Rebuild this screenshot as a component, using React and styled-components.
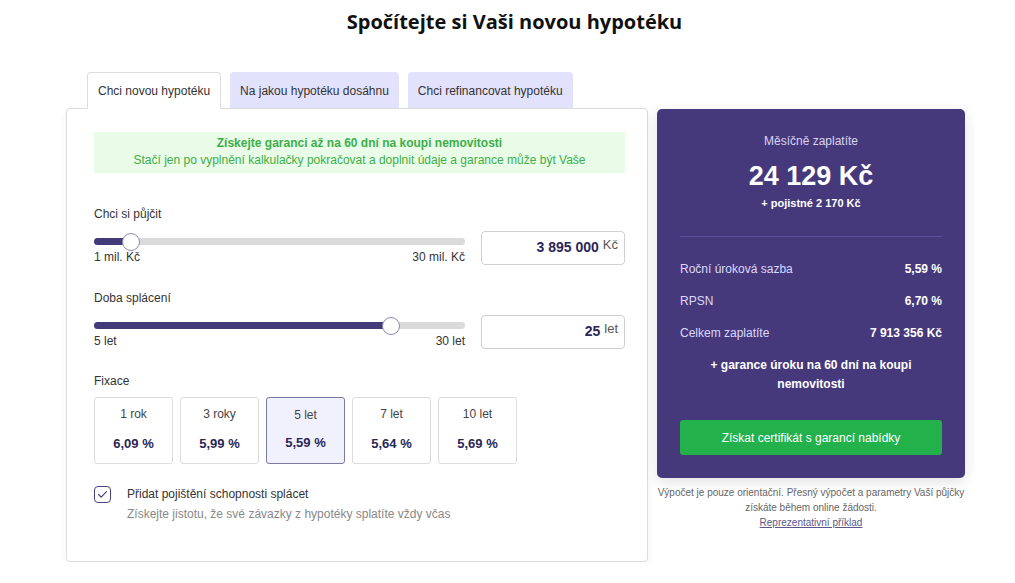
import styled, { createGlobalStyle } from "styled-components"

const GlobalStyle = createGlobalStyle`
    * { box-sizing: border-box; }
    body {
        margin: 0;
        background: #fff;
        font-family: "Liberation Sans", Arial, sans-serif;
        color: #333;
    }
`

const fixations = [
    { label: '1 rok', rate: '6,09 %' },
    { label: '3 roky', rate: '5,99 %' },
    { label: '5 let', rate: '5,59 %', active: true },
    { label: '7 let', rate: '5,64 %' },
    { label: '10 let', rate: '5,69 %' },
]

const Slider = ({ percent }) => (
    <Track>
        <Fill style={{ width: percent + '%' }} />
        <Thumb style={{ left: percent + '%' }} />
    </Track>
)

const App = () => {
    return (
        <Page>
            <GlobalStyle />
            <Title>Spočítejte si Vaši novou hypotéku</Title>

            <Main>
                <LeftColumn>
                    <Tabs>
                        <Tab $active>Chci novou hypotéku</Tab>
                        <Tab>Na jakou hypotéku dosáhnu</Tab>
                        <Tab>Chci refinancovat hypotéku</Tab>
                    </Tabs>

                    <Card>
                        <Banner>
                            <strong>Získejte garanci až na 60 dní na koupi nemovitosti</strong>
                            <span>Stačí jen po vyplnění kalkulačky pokračovat a doplnit údaje a garance může být Vaše</span>
                        </Banner>

                        <Field $top={34}>
                            <Label>Chci si půjčit</Label>
                            <SliderRow>
                                <SliderBox>
                                    <Slider percent={10} />
                                    <Limits>
                                        <span>1 mil. Kč</span>
                                        <span>30 mil. Kč</span>
                                    </Limits>
                                </SliderBox>
                                <ValueInput>
                                    <b>3 895 000</b>
                                    <small>Kč</small>
                                </ValueInput>
                            </SliderRow>
                        </Field>

                        <Field $top={26}>
                            <Label>Doba splácení</Label>
                            <SliderRow>
                                <SliderBox>
                                    <Slider percent={80} />
                                    <Limits>
                                        <span>5 let</span>
                                        <span>30 let</span>
                                    </Limits>
                                </SliderBox>
                                <ValueInput>
                                    <b>25</b>
                                    <small>let</small>
                                </ValueInput>
                            </SliderRow>
                        </Field>

                        <Field $top={25}>
                            <Label>Fixace</Label>
                            <FixList>
                                {fixations.map(f => (
                                    <FixOption key={f.label} $active={f.active}>
                                        <span>{f.label}</span>
                                        <b>{f.rate}</b>
                                    </FixOption>
                                ))}
                            </FixList>
                        </Field>

                        <Insurance>
                            <Checkbox>
                                <svg width="11" height="9" viewBox="0 0 11 9">
                                    <path d="M1.5 4.5 L4.2 7.2 L9.5 1.6" fill="none" stroke="#4a4180" strokeWidth="1.2" strokeLinecap="round" strokeLinejoin="round" />
                                </svg>
                            </Checkbox>
                            <InsuranceBody>
                                <InsuranceTitle>Přidat pojištění schopnosti splácet</InsuranceTitle>
                                <InsuranceText>Získejte jistotu, že své závazky z hypotéky splatíte vždy včas</InsuranceText>
                            </InsuranceBody>
                        </Insurance>
                    </Card>
                </LeftColumn>

                <RightColumn>
                    <Summary>
                        <SummaryLabel>Měsíčně zaplatíte</SummaryLabel>
                        <Amount>24 129 Kč</Amount>
                        <Extra>+ pojistné 2 170 Kč</Extra>

                        <Divider />

                        <Row><span>Roční úroková sazba</span><b>5,59 %</b></Row>
                        <Row><span>RPSN</span><b>6,70 %</b></Row>
                        <Row><span>Celkem zaplatíte</span><b>7 913 356 Kč</b></Row>

                        <Guarantee>+ garance úroku na 60 dní na koupi nemovitosti</Guarantee>

                        <GreenButton>Získat certifikát s garancí nabídky</GreenButton>
                    </Summary>

                    <Note>
                        Výpočet je pouze orientační. Přesný výpočet a parametry Vaší půjčky získáte během online žádosti.
                        <a href="#">Reprezentativní příklad</a>
                    </Note>
                </RightColumn>
            </Main>
        </Page>
    )
}

export default App

const Page = styled.div`
    width: 1015px;
    padding-top: 8px;
`

const Title = styled.h1`
    margin: 0;
    padding-left: 14px;
    text-align: center;
    font-family: "Open Sans", "Noto Sans", sans-serif;
    font-size: 20px;
    font-weight: 700;
    color: #111;
    line-height: 27px;
`

const Main = styled.div`
    display: flex;
    align-items: flex-start;
    gap: 9px;
    padding: 37px 0 0 66px;
`

const LeftColumn = styled.div`
    width: 582px;
    display: flex;
    flex-direction: column;
`

const Tabs = styled.div`
    display: flex;
    gap: 9px;
    padding-left: 21px;
    position: relative;
    z-index: 1;
    margin-bottom: -1px;
`

const Tab = styled.div`
    height: ${p => p.$active ? '37px' : '36px'};
    padding: ${p => p.$active ? '0 10px' : '0 9px'};
    display: flex;
    align-items: center;
    font-size: 12px;
    color: #333;
    border-radius: 4px 4px 0 0;
    background: ${p => p.$active ? '#fff' : '#e3e2fc'};
    border: 1px solid ${p => p.$active ? '#dcdcdc' : '#e3e2fc'};
    border-bottom: ${p => p.$active ? '1px solid #fff' : 'none'};
`

const Card = styled.div`
    height: 454px;
    background: #fff;
    border: 1px solid #dcdcdc;
    border-radius: 4px;
    box-shadow: 0 3px 10px rgba(0, 0, 0, 0.06);
    padding: 23px 22px 0 27px;
`

const Banner = styled.div`
    background: #e8fce8;
    color: #3fae4a;
    font-size: 12px;
    text-align: center;
    padding: 3px 0 4px;
    line-height: 17px;
    display: flex;
    flex-direction: column;

    strong {
        font-weight: 700;
    }
`

const Field = styled.div`
    margin-top: ${p => p.$top}px;
`

const Label = styled.div`
    font-size: 12px;
    color: #333;
    line-height: 14px;
`

const SliderRow = styled.div`
    display: flex;
    align-items: flex-start;
    gap: 16px;
    margin-top: 10px;
`

const SliderBox = styled.div`
    flex: 0 0 371px;
    padding-top: 7px;
`

const Track = styled.div`
    position: relative;
    height: 7px;
    border-radius: 4px;
    background: #dadada;
`

const Fill = styled.div`
    height: 100%;
    border-radius: 4px;
    background: #433a7a;
`

const Thumb = styled.div`
    position: absolute;
    top: 50%;
    width: 18px;
    height: 18px;
    border-radius: 50%;
    background: #fff;
    border: 1px solid #8f8ab0;
    transform: translate(-50%, -50%);
`

const Limits = styled.div`
    display: flex;
    justify-content: space-between;
    font-size: 12px;
    color: #333;
    margin-top: 5px;
    line-height: 14px;
`

const ValueInput = styled.div`
    width: 144px;
    height: 34px;
    border: 1px solid #cfcfcf;
    border-radius: 4px;
    display: flex;
    align-items: center;
    justify-content: flex-end;
    gap: 4px;
    padding: 0 6px 2px;

    b {
        font-size: 14px;
        font-weight: 700;
        color: #2b2656;
    }

    small {
        font-size: 13px;
        color: #555;
        position: relative;
        top: -3px;
    }
`

const FixList = styled.div`
    display: flex;
    gap: 7px;
    margin-top: 9px;
`

const FixOption = styled.div`
    width: 79px;
    height: 67px;
    border-radius: 3px;
    border: 1px solid ${p => p.$active ? '#7c78a6' : '#dcdcdc'};
    background: ${p => p.$active ? '#f1f0fd' : '#fff'};
    display: flex;
    flex-direction: column;
    align-items: center;
    padding-top: ${p => p.$active ? '10px' : '9px'};

    span {
        font-size: 12px;
        color: #444;
        line-height: 14px;
    }

    b {
        margin-top: ${p => p.$active ? '13px' : '15px'};
        font-size: 13px;
        color: #2b2656;
        font-weight: 700;
    }
`

const Insurance = styled.div`
    display: flex;
    gap: 16px;
    margin-top: 21px;
`

const Checkbox = styled.div`
    width: 17px;
    height: 17px;
    border: 1px solid #4a4180;
    border-radius: 4px;
    display: flex;
    align-items: center;
    justify-content: center;
    flex-shrink: 0;
    margin-top: 1px;
`

const InsuranceBody = styled.div`
    padding-top: 2px;
`

const InsuranceTitle = styled.div`
    font-size: 12px;
    color: #333;
    line-height: 14px;
`

const InsuranceText = styled.div`
    font-size: 12px;
    color: #888;
    margin-top: 6px;
    line-height: 14px;
`

const RightColumn = styled.div`
    width: 308px;
    display: flex;
    flex-direction: column;
    align-items: center;
    padding-top: 37px;
`

const Summary = styled.div`
    width: 100%;
    height: 369px;
    background: #45397b;
    border-radius: 5px;
    box-shadow: 0 4px 14px rgba(0, 0, 0, 0.12);
    padding: 24px 23px 0;
    display: flex;
    flex-direction: column;
    color: #fff;
`

const SummaryLabel = styled.div`
    text-align: center;
    font-size: 12px;
    color: #d9d5f3;
    line-height: 16px;
`

const Amount = styled.div`
    text-align: center;
    font-size: 27px;
    font-weight: 700;
    margin-top: 12px;
    line-height: 30px;
`

const Extra = styled.div`
    text-align: center;
    font-size: 11px;
    font-weight: 700;
    margin-top: 6px;
    line-height: 13px;
`

const Divider = styled.div`
    height: 1px;
    background: #5c519a;
    margin: 26px 0 25px;
`

const Row = styled.div`
    display: flex;
    justify-content: space-between;
    font-size: 12px;
    line-height: 14px;
    margin-bottom: 18px;

    span {
        color: #dcd8ff;
    }

    b {
        color: #fff;
        font-weight: 700;
    }
`

const Guarantee = styled.div`
    text-align: center;
    font-size: 12px;
    font-weight: 700;
    line-height: 19px;
    padding: 0 20px;
    margin-top: -2px;
`

const GreenButton = styled.button`
    margin-top: 26px;
    height: 35px;
    border: none;
    border-radius: 3px;
    background: #23b14c;
    color: #fff;
    font-family: inherit;
    font-size: 12px;
`

const Note = styled.div`
    margin-top: 7px;
    width: 312px;
    text-align: center;
    font-size: 10px;
    color: #666;
    line-height: 15px;

    a {
        display: block;
        color: #5b5788;
        text-decoration: underline;
    }
`
